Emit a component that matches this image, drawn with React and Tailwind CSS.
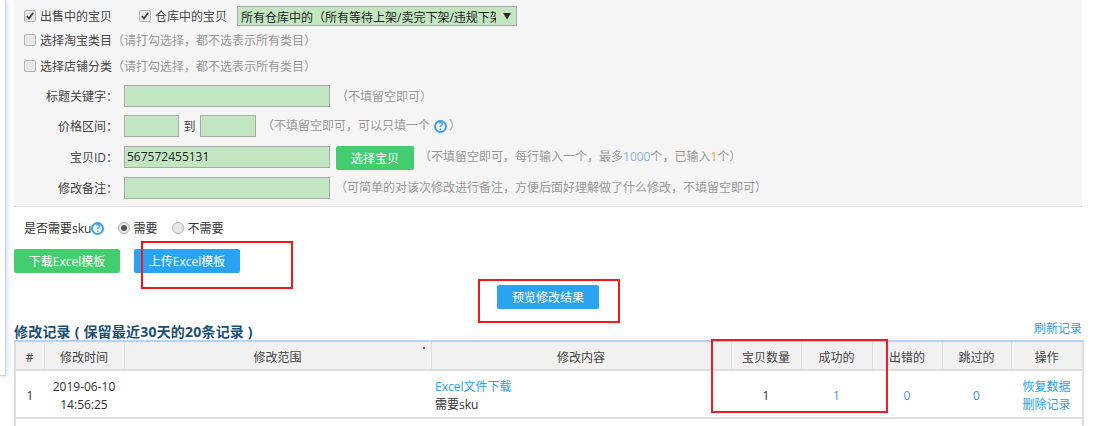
import React from "react";

const L = "\uFF08";
const R = "\uFF09";
const C = "\uFF0C";
const K = "\uFF1A";

function Check({ on }) {
  return (
    <span className="flex h-[12px] w-[12px] shrink-0 items-center justify-center rounded-[2px] border border-[#b5b5b5] bg-[#e6e6e6]">
      {on && (
        <svg width="10" height="10" viewBox="0 0 10 10">
          <path d="M1.8 5.2 L4 7.6 L8.2 1.8" fill="none" stroke="#444" strokeWidth="1.8" />
        </svg>
      )}
    </span>
  );
}

function Radio({ on }) {
  return (
    <span className="flex h-[12px] w-[12px] shrink-0 items-center justify-center rounded-full border border-[#b0b0b0] bg-[#e8e8e8]">
      {on && <span className="h-[6px] w-[6px] rounded-full bg-[#555]" />}
    </span>
  );
}

function Help() {
  return (
    <span className="inline-flex h-[13px] w-[13px] items-center justify-center rounded-full border-2 border-[#3d9df0] bg-white text-[10px] font-bold leading-none text-[#3d9df0]">
      ?
    </span>
  );
}

function Label({ children }) {
  return <div className="h-[22px] w-[104px] shrink-0 pt-[1px] text-right leading-[22px] text-[#444]">{children}</div>;
}

function Field({ w, value }) {
  return (
    <div className={`h-[22px] shrink-0 border border-[#aaa] bg-[#c2e6c2] pl-[2px] leading-[20px] text-[#222] ${w}`}>
      {value}
    </div>
  );
}

function Hint({ children, cls }) {
  return <span className={`h-[22px] leading-[22px] text-[#999] ${cls || ""}`}>{children}</span>;
}

const Th = ({ children }) => (
  <th className="h-[29px] border-x border-b-2 border-[#dedede] bg-[#f1f1f1] p-0 pt-[4px] text-center font-normal text-[#444]">
    {children}
  </th>
);
const Td = ({ children, cls }) => (
  <td className={`border-b-2 border-[#dedede] p-0 pt-[4px] text-center leading-[18px] ${cls || "text-[#333]"}`}>{children}</td>
);

export default function App() {
  return (
    <div className="relative h-[426px] w-[1113px] overflow-hidden bg-white font-['Open_Sans','Noto_Sans_CJK_SC',sans-serif] text-[12px] text-[#444]">
      {/* sidebar edge */}
      <div className="absolute left-0 top-0 h-[376px] w-[6px] border-b border-r border-[#c6d2e0] bg-white shadow-[0_0_6px_rgba(120,150,190,0.45)]" />

      <div className="ml-[14px] w-[1068px]">
        {/* filter panel */}
        <div className="border-b border-[#dcdcdc] bg-[#f5f5f5] pb-[7px] pl-[10px] pt-[6px]">
          <div className="flex h-[20px] items-center">
            <Check on />
            <span className="ml-[4px] w-[99px] pt-[1px] text-[#444]">出售中的宝贝</span>
            <Check on />
            <span className="ml-[4px] w-[82px] pt-[1px] text-[#444]">仓库中的宝贝</span>
            <div className="flex h-[20px] w-[280px] items-start overflow-hidden border border-[#aaa] bg-[#c2e6c2] pl-[3px] leading-[21px] text-[#222]">
              <span className="block w-[255px] overflow-hidden whitespace-nowrap">{`所有仓库中的${L}所有等待上架/卖完下架/违规下架${R}`}</span>
              <span className="ml-[7px] text-[8px] leading-[17px]">▼</span>
            </div>
          </div>
          <div className="mt-[4px] flex h-[20px] items-center">
            <Check />
            <span className="ml-[4px] pt-[1px] text-[#444]">选择淘宝类目</span>
            <span className="pt-[1px] text-[#999]">{`${L}请打勾选择${C}都不选表示所有类目${R}`}</span>
          </div>
          <div className="mt-[6px] flex h-[20px] items-center">
            <Check />
            <span className="ml-[4px] pt-[1px] text-[#444]">选择店铺分类</span>
            <span className="pt-[1px] text-[#999]">{`${L}请打勾选择${C}都不选表示所有类目${R}`}</span>
          </div>

          <div className="-ml-[10px]">
            <div className="mt-[9px] flex">
              <Label>{`标题关键字${K}`}</Label>
              <div className="ml-[6px]"><Field w="w-[206px]" /></div>
              <Hint cls="ml-[6px] pt-[1px]">{`${L}不填留空即可${R}`}</Hint>
            </div>
            <div className="mt-[8px] flex">
              <Label>{`价格区间${K}`}</Label>
              <div className="ml-[6px]"><Field w="w-[55px]" /></div>
              <span className="h-[22px] w-[21px] pt-[1px] text-center leading-[22px] text-[#444]">到</span>
              <Field w="w-[56px]" />
              <Hint cls="ml-[6px]">{`${L}不填留空即可${C}可以只填一个`}</Hint>
              <span className="ml-[4px] flex h-[22px] items-center"><Help /></span>
              <Hint cls="ml-[2px]">{R}</Hint>
            </div>
            <div className="mt-[9px] flex h-[22px]">
              <Label>{`宝贝ID${K}`}</Label>
              <div className="ml-[6px]"><Field w="w-[206px]" value="567572455131" /></div>
              <button className="ml-[6px] h-[24px] w-[78px] rounded-[2px] bg-[#43cd6e] pt-[1px] text-[12px] text-white">选择宝贝</button>
              <Hint cls="ml-[5px]">
                {`${L}不填留空即可${C}每行输入一个${C}最多`}<span className="text-[#8fb3d9]">1000</span>{`个${C}已输入`}<span className="text-[#f5a030]">1</span>{`个${R}`}
              </Hint>
            </div>
            <div className="mt-[9px] flex">
              <Label>{`修改备注${K}`}</Label>
              <div className="ml-[6px]"><Field w="w-[206px]" /></div>
              <Hint cls="ml-[5px]">{`${L}可简单的对该次修改进行备注${C}方便后面好理解做了什么修改${C}不填留空即可${R}`}</Hint>
            </div>
          </div>
        </div>

        {/* sku radio */}
        <div className="mt-[12px] flex h-[18px] items-center pl-[10px]">
          <span className="pt-[1px] text-[#333]">是否需要sku</span>
          <Help />
          <span className="ml-[14px]"><Radio on /></span>
          <span className="ml-[3px] w-[39px] pt-[1px] text-[#333]">需要</span>
          <Radio />
          <span className="ml-[3px] pt-[1px] text-[#333]">不需要</span>
        </div>

        {/* excel buttons */}
        <div className="mt-[12px] flex gap-[14px]">
          <button className="h-[24px] w-[106px] rounded-[2px] bg-[#43cd6e] pt-[1px] text-[12px] text-white">下载Excel模板</button>
          <button className="h-[24px] w-[106px] rounded-[2px] bg-[#2aa4f0] pt-[1px] text-[12px] text-white">上传Excel模板</button>
        </div>

        <div className="mt-[12px] flex justify-center">
          <button className="h-[24px] w-[102px] rounded-[2px] bg-[#2aa4f0] pt-[1px] text-[12px] text-white">预览修改结果</button>
        </div>

        {/* records title */}
        <div className="mt-[11px] flex h-[20px] items-center justify-between pt-[2px]">
          <span className="text-[14px] font-bold tracking-[0.2px] text-[#1b4f78]">修改记录 ( 保留最近30天的20条记录 )</span>
          <span className="mt-[-4px] text-[#2ba0f0]">刷新记录</span>
        </div>

        {/* table */}
        <table className="w-[1068px] table-fixed border-collapse border-x-2 border-t-0 border-[#dedede]">
          <colgroup>
            <col className="w-[29px]" />
            <col className="w-[80px]" />
            <col className="w-[307px]" />
            <col className="w-[300px]" />
            <col className="w-[70px]" />
            <col className="w-[71px]" />
            <col className="w-[70px]" />
            <col className="w-[69px]" />
            <col className="w-[72px]" />
          </colgroup>
          <thead className="border-t-2 border-[#b3d1fb]">
            <tr>
              <Th>#</Th>
              <Th>修改时间</Th>
              <Th>修改范围</Th>
              <Th>修改内容</Th>
              <Th>宝贝数量</Th>
              <Th>成功的</Th>
              <Th>出错的</Th>
              <Th>跳过的</Th>
              <Th>操作</Th>
            </tr>
          </thead>
          <tbody>
            <tr className="h-[48px]">
              <Td>1</Td>
              <Td>2019-06-10<br />14:56:25</Td>
              <Td></Td>
              <Td cls="!text-left pl-[4px] text-[#333]">
                <span className="text-[#2ba0f0]">Excel文件下载</span><br />需要sku
              </Td>
              <Td>1</Td>
              <Td cls="text-[#4a90e2]">1</Td>
              <Td cls="text-[#4a90e2]">0</Td>
              <Td cls="text-[#4a90e2]">0</Td>
              <Td cls="text-[#2ba0f0]">恢复数据<br />删除记录</Td>
            </tr>
            <tr className="h-[20px]"><td colSpan={9}></td></tr>
          </tbody>
        </table>
      </div>

      {/* annotations */}
      <div className="absolute left-[423px] top-[347px] h-[2px] w-[2px] bg-[#e33]" />
      <div className="absolute left-[141px] top-[241px] h-[48px] w-[152px] border-2 border-[#f01a1a]" />
      <div className="absolute left-[478px] top-[279px] h-[44px] w-[142px] border-2 border-[#f01a1a]" />
      <div className="absolute left-[711px] top-[339px] h-[74px] w-[177px] border-2 border-[#ee1c25]" />
    </div>
  );
}
